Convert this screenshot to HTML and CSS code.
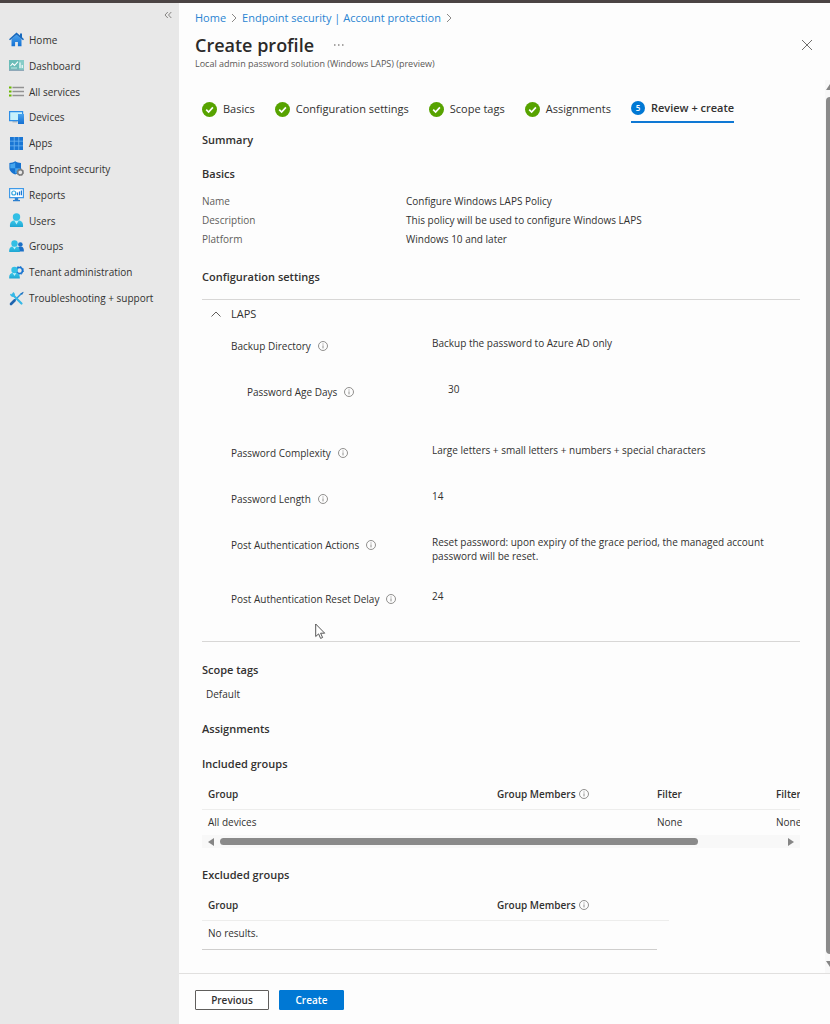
FILE: index.html
```html
<!DOCTYPE html>
<html lang="en">
<head>
<meta charset="utf-8">
<title>Create profile</title>
<link rel="stylesheet" href="styles.css">
</head>
<body>
<svg class="defs" aria-hidden="true">
  <defs>
    <linearGradient id="blue" x1="0" y1="0" x2="0" y2="1"><stop offset="0" stop-color="#4aa3ee"/><stop offset="1" stop-color="#1470d2"/></linearGradient>
    <linearGradient id="cyan" x1="0" y1="0" x2="0" y2="1"><stop offset="0" stop-color="#38c8ea"/><stop offset="1" stop-color="#1fa5d2"/></linearGradient>
    <symbol id="info" viewBox="0 0 10 10"><circle cx="5" cy="5" r="4.5" fill="none" stroke="#858381" stroke-width=".9"/><path d="M5 4.4v3M5 2.5v1" stroke="#858381" stroke-width=".9"/></symbol>
    <symbol id="check" viewBox="0 0 15 15"><circle cx="7.5" cy="7.5" r="7.5" fill="#57a300"/><path d="M4.2 7.6l2.4 2.4 4.3-4.6" fill="none" stroke="#fff" stroke-width="1.7"/></symbol>
    <symbol id="chev" viewBox="0 0 6 10"><path d="M1 1l4 4-4 4" fill="none" stroke="#8a8886"/></symbol>
  </defs>
</svg>
<div class="topbar"></div>
<div class="shell">
  <aside class="sidebar">
    <button class="collapse" aria-label="Collapse menu"><svg width="8" height="8" viewBox="0 0 8 8"><path d="M3.8 1L1 4l2.8 3M7.3 1L4.5 4l2.8 3" fill="none" stroke="#7a7876" stroke-width=".9"/></svg></button>
    <nav>
      <ul class="menu">
        <li><a href="#"><svg viewBox="0 0 15 15"><path d="M2.500 7v7.200h3.600V10h2.800v4.200h3.600V7L7.500 2.400z" fill="url(#blue)"/><path d="M7.500.4L0 7.200l1 1.100 6.500-5.600L14 8.300l1-1.100-2-1.900V1.500h-2v2z" fill="#1769be"/></svg>Home</a></li>
        <li><a href="#"><svg viewBox="0 0 15 15"><path d="M0 2h15v11H0z" fill="#6bbcb8"/><path d="M0 11.500h15V13H0z" fill="#8fa8b8"/><path d="M10 2h5v9.500h-5z" fill="#86ccc7"/><path d="M1.500 8l2-2.500 2 2 3.500-3.800M11 10V4.500M13.200 10V7" fill="none" stroke="#fff" stroke-width="1.100"/><path d="M2 10h6" stroke="#d7f1ef" stroke-width=".8"/></svg>Dashboard</a></li>
        <li><a href="#"><svg viewBox="0 0 15 15"><path d="M3.500 3.500H15M3.500 7.500H15M3.500 11.500H15" stroke="#929292" stroke-width="1.300"/><path d="M0 3.500h2.500M0 7.500h2.500M0 11.500h2.500" stroke="#6bb700" stroke-width="2"/></svg>All services</a></li>
        <li><a href="#"><svg viewBox="0 0 15 15"><path d="M3.500 12.500h5V11h-5z" fill="#b5bcc4"/><path d="M.6 1.600h13v9H.6z" fill="#c7f2fc" stroke="#2d8ee6" stroke-width="1.200"/><path d="M9 4h6v10H9z" fill="url(#blue)"/></svg>Devices</a></li>
        <li><a href="#"><svg viewBox="0 0 15 15"><path d="M1 1h13v13H1z" fill="#70b6f1"/><path d="M1 1h3.800v3.800H1zM5.600 1h3.800v3.800H5.600zM10.200 1H14v3.800h-3.800zM1 5.600h3.800v3.800H1zM5.600 5.600h3.800v3.800H5.600zM10.200 5.600H14v3.800h-3.800zM1 10.200h3.800V14H1zM5.600 10.200h3.800V14H5.600zM10.200 10.200H14V14h-3.800z" fill="#1a76d4"/></svg>Apps</a></li>
        <li><a href="#"><svg viewBox="0 0 15 15"><path d="M6.200.3C4.500 1.600 2.700 2 .4 2v5c0 3.200 2.700 5.200 5.800 6.600C9.300 12.200 12 10.200 12 7V2C9.700 2 7.900 1.600 6.200.3z" fill="#1673d0"/><path d="M6.200 1.500v5.700H1.300V3c1.900 0 3.500-.5 4.900-1.500zM6.200 7.200h4.900c-.1 2.500-2.300 4-4.900 5.300z" fill="#45a6ee"/><circle cx="11.300" cy="11.300" r="2.600" fill="#e8e8e8" stroke="#7d7d7d" stroke-width="1.500"/><circle cx="11.300" cy="11.300" r="3.400" fill="none" stroke="#7d7d7d" stroke-width=".9" stroke-dasharray="1.300 1.370"/></svg>Endpoint security</a></li>
        <li><a href="#"><svg viewBox="0 0 15 15"><path d="M5.800 10h3.400v3H11v1.200H4V13h1.800z" fill="#2c7fcf"/><path d="M.6 1.600h13.800v9H.6z" fill="#fff" stroke="#3f9ae8" stroke-width="1.200"/><circle cx="4.800" cy="6" r="2" fill="none" stroke="#36a8e0" stroke-width="1.200"/><path d="M8.500 8.200V5.500M10.500 8.200V4.500M12.400 8.200V3.400" stroke="#1d79d2" stroke-width="1.200"/></svg>Reports</a></li>
        <li><a href="#"><svg viewBox="0 0 15 15"><path d="M1 14c-.5-4.200 1.300-6.500 4.300-6.500h4.400c3 0 4.800 2.300 4.300 6.500z" fill="url(#cyan)"/><path d="M5.300 7.500h4.400L7.500 11.500z" fill="#c4f0f8"/><circle cx="7.500" cy="4" r="3.700" fill="#32bfe5"/></svg>Users</a></li>
        <li><a href="#"><svg viewBox="0 0 15 15"><path d="M8.500 12.500c0-3 .3-4.800 2.200-4.800h1.500c2 0 2.800 2 2.700 4.800z" fill="#1a70c8"/><circle cx="11.400" cy="5.500" r="2.300" fill="#1a70c8"/><path d="M.2 13c-.3-3.500 1-5.500 3.500-5.500h3.500c2.500 0 3.900 2 3.600 5.500z" fill="url(#cyan)"/><path d="M3.700 7.500h3.500l-1.700 3z" fill="#c4f0f8"/><circle cx="5.500" cy="4.500" r="3.200" fill="#32bfe5"/></svg>Groups</a></li>
        <li><a href="#"><svg viewBox="0 0 15 15"><circle cx="10.500" cy="5.500" r="3" fill="none" stroke="#1673d0" stroke-width="1.600"/><circle cx="10.500" cy="5.500" r="4" fill="none" stroke="#1673d0" stroke-width="1" stroke-dasharray="1.570 1.570"/><path d="M.2 13.500c-.3-3.500 1-5.500 3.500-5.500h3.500c2.500 0 3.900 2 3.600 5.500z" fill="url(#cyan)"/><path d="M3.700 8h3.500l-1.700 3z" fill="#c4f0f8"/><circle cx="5.500" cy="5" r="3.200" fill="#32bfe5"/></svg>Tenant administration</a></li>
        <li><a href="#"><svg viewBox="0 0 15 15"><path d="M12.500 2.500L2.500 12.500" stroke="#2a93dc" stroke-width="1.400"/><path d="M5.500 9.500L2 13" stroke="#1d64ae" stroke-width="2.600" stroke-linecap="round"/><path d="M3.500 3.500L12.500 12.500" stroke="#36b8e6" stroke-width="2.200" stroke-linecap="round"/><path d="M1 2.800l2.300 1L4 1A3 3 0 0 1 5.500 5.500 3 3 0 0 1 1 2.800z" fill="#36b8e6"/><path d="M11.500 2.500L14.200.8l.4.500L13 4z" fill="#1f70bd"/></svg>Troubleshooting + support</a></li>
      </ul>
    </nav>
  </aside>
  <main class="main">
    <header class="head">
      <nav class="crumbs" aria-label="Breadcrumb">
        <a href="#">Home</a><svg><use href="#chev"/></svg><a href="#">Endpoint security | Account protection</a><svg><use href="#chev"/></svg>
      </nav>
      <div class="titlebar">
        <h1>Create profile</h1>
        <button class="more" aria-label="More"><svg width="10" height="2" viewBox="0 0 10 2"><path d="M0 1h1.500M4 1h1.500M8 1h1.500" stroke="#8a8886" stroke-width="1.300"/></svg></button>
        <button class="close" aria-label="Close"><svg width="10" height="10" viewBox="0 0 10 10"><path d="M0 0l10 10M10 0L0 10" stroke="#706e6c"/></svg></button>
      </div>
      <p class="subtitle">Local admin password solution (Windows LAPS) (preview)</p>
    </header>
    <div class="scroller">
      <div class="content">
        <nav class="steps">
          <a href="#"><svg><use href="#check"/></svg>Basics</a>
          <a href="#"><svg><use href="#check"/></svg>Configuration settings</a>
          <a href="#"><svg><use href="#check"/></svg>Scope tags</a>
          <a href="#"><svg><use href="#check"/></svg>Assignments</a>
          <a href="#" class="current"><span class="num">5</span>Review + create</a>
        </nav>
        <h2 class="summary">Summary</h2>
        <section>
          <h2>Basics</h2>
          <dl class="basics">
            <dt>Name</dt><dd>Configure Windows LAPS Policy</dd>
            <dt>Description</dt><dd>This policy will be used to configure Windows LAPS</dd>
            <dt>Platform</dt><dd>Windows 10 and later</dd>
          </dl>
        </section>
        <section>
          <h2>Configuration settings</h2>
          <div class="config">
            <button class="group"><svg width="10" height="6" viewBox="0 0 10 6"><path d="M.5 5.500L5 1l4.500 4.500" fill="none" stroke="#605e5c"/></svg>LAPS</button>
            <dl class="settings">
              <div><dt>Backup Directory<svg><use href="#info"/></svg></dt><dd>Backup the password to Azure AD only</dd></div>
              <div class="child"><dt>Password Age Days<svg><use href="#info"/></svg></dt><dd>30</dd></div>
              <div><dt>Password Complexity<svg><use href="#info"/></svg></dt><dd>Large letters + small letters + numbers + special characters</dd></div>
              <div><dt>Password Length<svg><use href="#info"/></svg></dt><dd>14</dd></div>
              <div><dt>Post Authentication Actions<svg><use href="#info"/></svg></dt><dd>Reset password: upon expiry of the grace period, the managed account password will be reset.</dd></div>
              <div><dt>Post Authentication Reset Delay<svg><use href="#info"/></svg></dt><dd>24</dd></div>
            </dl>
            <svg class="pointer" width="11" height="17" viewBox="0 0 11 17" aria-hidden="true"><path d="M.7 1v12.500l2.900-2.600 2 4.500 2-.9-2-4.300h4.100z" fill="#fff" stroke="#444" stroke-width=".9"/></svg>
          </div>
        </section>
        <section>
          <h2>Scope tags</h2>
          <p class="tag">Default</p>
        </section>
        <section>
          <h2>Assignments</h2>
          <h3>Included groups</h3>
          <div class="hscroll">
            <table class="included">
              <thead><tr><th class="wide">Group</th><th class="mid">Group Members<svg><use href="#info"/></svg></th><th class="slim">Filter</th><th class="mid">Filter</th></tr></thead>
              <tbody><tr><td>All devices</td><td></td><td>None</td><td>None</td></tr></tbody>
            </table>
          </div>
          <div class="hbar"><svg width="6" height="8" viewBox="0 0 6 8"><path d="M6 0v8L0 4z" fill="#858585"/></svg><div class="track"><div class="thumb"></div></div><svg width="6" height="8" viewBox="0 0 6 8"><path d="M0 0v8l6-4z" fill="#858585"/></svg></div>
          <h3>Excluded groups</h3>
          <div class="excluded">
            <table>
              <thead><tr><th class="wide">Group</th><th>Group Members<svg><use href="#info"/></svg></th></tr></thead>
              <tbody><tr><td colspan="2">No results.</td></tr></tbody>
            </table>
          </div>
        </section>
      </div>
      <div class="vbar"><svg width="8" height="6" viewBox="0 0 8 6"><path d="M0 6h8L4 0z" fill="#858585"/></svg><div class="vthumb"></div><svg width="8" height="6" viewBox="0 0 8 6"><path d="M0 0h8L4 6z" fill="#858585"/></svg></div>
    </div>
    <footer class="foot">
      <button class="btn">Previous</button>
      <button class="btn primary">Create</button>
    </footer>
  </main>
</div>
</body>
</html>
```
FILE: styles.css
```css
* { box-sizing: border-box; }
body, h1, h2, h3, p, dl, dd, ul { margin: 0; padding: 0; }
body {
  display: flex;
  flex-direction: column;
  min-height: 100vh;
  overflow: hidden;
  background: #fdfdfd;
  color: #323130;
  font: 10px/16px "Open Sans", "Noto Sans", sans-serif;
}
a { color: inherit; text-decoration: none; }
button { font: inherit; color: inherit; background: none; border: 0; padding: 0; }
svg { display: block; flex: none; }
.defs { position: absolute; width: 0; height: 0; }
.topbar { height: 3px; background: #4b4444; }
.shell { display: flex; flex: 1; }

.sidebar { width: 179px; flex: none; background: #e8e8e8; }
.collapse { display: block; margin: 8px 7px 8px auto; }
.menu {
  display: grid;
  grid-auto-rows: 1fr;
  height: 284px;
  list-style: none;
}
.menu a { display: flex; align-items: center; gap: 5px; height: 100%; padding-left: 9px; }
.menu svg { width: 15px; height: 15px; }

.main { display: flex; flex-direction: column; flex: 1; min-width: 0; }
.head { padding: 7px 18px 0 16px; }
.crumbs { display: flex; align-items: center; gap: 5px; font-size: 11px; color: #2a84d2; }
.crumbs svg { width: 6px; height: 10px; }
.titlebar { display: flex; align-items: center; gap: 20px; height: 38px; }
h1 { font-size: 18px; line-height: 24px; font-weight: 600; color: #2b2a29; }
.close { margin-left: auto; }
.subtitle { font-size: 9px; line-height: 16px; color: #5a5856; margin-top: -8px; }

.scroller { display: flex; flex: 1; padding-top: 8px; }
.content { flex: 1; min-width: 0; padding: 0 25px 23px 23px; }
.steps { display: flex; gap: 20px; height: 43px; padding-top: 15px; font-size: 11px; }
.steps a { display: flex; align-items: center; gap: 6px; height: 28px; white-space: nowrap; }
.steps svg { width: 15px; height: 15px; }
.steps .current { font-weight: 600; border-bottom: 2px solid #0f78d4; }
.num {
  width: 14px; height: 14px; border-radius: 50%;
  background: #0078d4; color: #fff;
  font-size: 8px; line-height: 14px; text-align: center;
}
h2, h3 { font-size: 11px; line-height: 16px; font-weight: 600; }
.summary { margin: 9px 0 18px; }
.basics { display: grid; grid-template-columns: 204px 1fr; row-gap: 3px; margin: 11px 0 22px; }
.basics dt { color: #5f5d5b; }

.config {
  position: relative;
  margin: 14px 0 20px;
  padding: 6px 0;
  border-top: 1px solid #d8d7d6;
  border-bottom: 1px solid #d8d7d6;
}
.group { display: flex; align-items: center; gap: 10px; padding-left: 9px; font-size: 11px; }
.settings { padding: 14px 0 0 29px; }
.settings > div { display: grid; grid-template-columns: 201px 1fr; min-height: 46px; padding-bottom: 26px; }
.settings .child { padding-left: 16px; min-height: 61px; }
.settings dt { display: flex; align-items: center; gap: 7px; height: 16px; margin-top: 2px; }
.settings dt svg { width: 10px; height: 10px; }
.settings dd { line-height: 14px; padding-right: 24px; }
.pointer { position: absolute; left: 113px; bottom: 1px; }
.tag { padding-left: 4px; margin: 8px 0 19px; }

table { border-collapse: collapse; table-layout: fixed; }
th { text-align: left; font-weight: 600; height: 29px; padding: 0 6px; border-bottom: 1px solid #ededec; white-space: nowrap; }
th svg { display: inline-block; width: 10px; height: 10px; margin-left: 3px; vertical-align: -1px; }
td { height: 26px; padding: 0 6px; }
.wide { width: 289px; }
.mid { width: 160px; }
.slim { width: 119px; }
h3 { margin: 19px 0 8px; }
.hscroll { overflow: hidden; }
.included { width: 728px; }
.hbar { display: flex; align-items: center; gap: 6px; height: 13px; padding: 0 6px; background: #f8f8f8; }
.track { flex: 1; }
.thumb { width: 85%; height: 7px; border-radius: 4px; background: #8a8a8a; }
.excluded { width: 455px; padding-bottom: 3px; border-bottom: 1px solid #cfcecd; }
.excluded table { width: 467px; }

.vbar { display: flex; flex-direction: column; gap: 7px; width: 5px; overflow: hidden; padding: 4px 0 6px 1px; background: #f8f8f8; }
.vthumb { flex: 1; width: 8px; border-radius: 4px; background: #8a8a8a; }

.foot { display: flex; gap: 10px; padding: 16px 16px 14px; border-top: 1px solid #e1e0df; }
.btn { width: 74px; height: 20px; border: 1px solid #605e5c; border-radius: 1px; font-weight: 600; line-height: 16px; background: #fff; }
.primary { width: 65px; border-color: #0078d4; background: #0078d4; color: #fff; }
```
